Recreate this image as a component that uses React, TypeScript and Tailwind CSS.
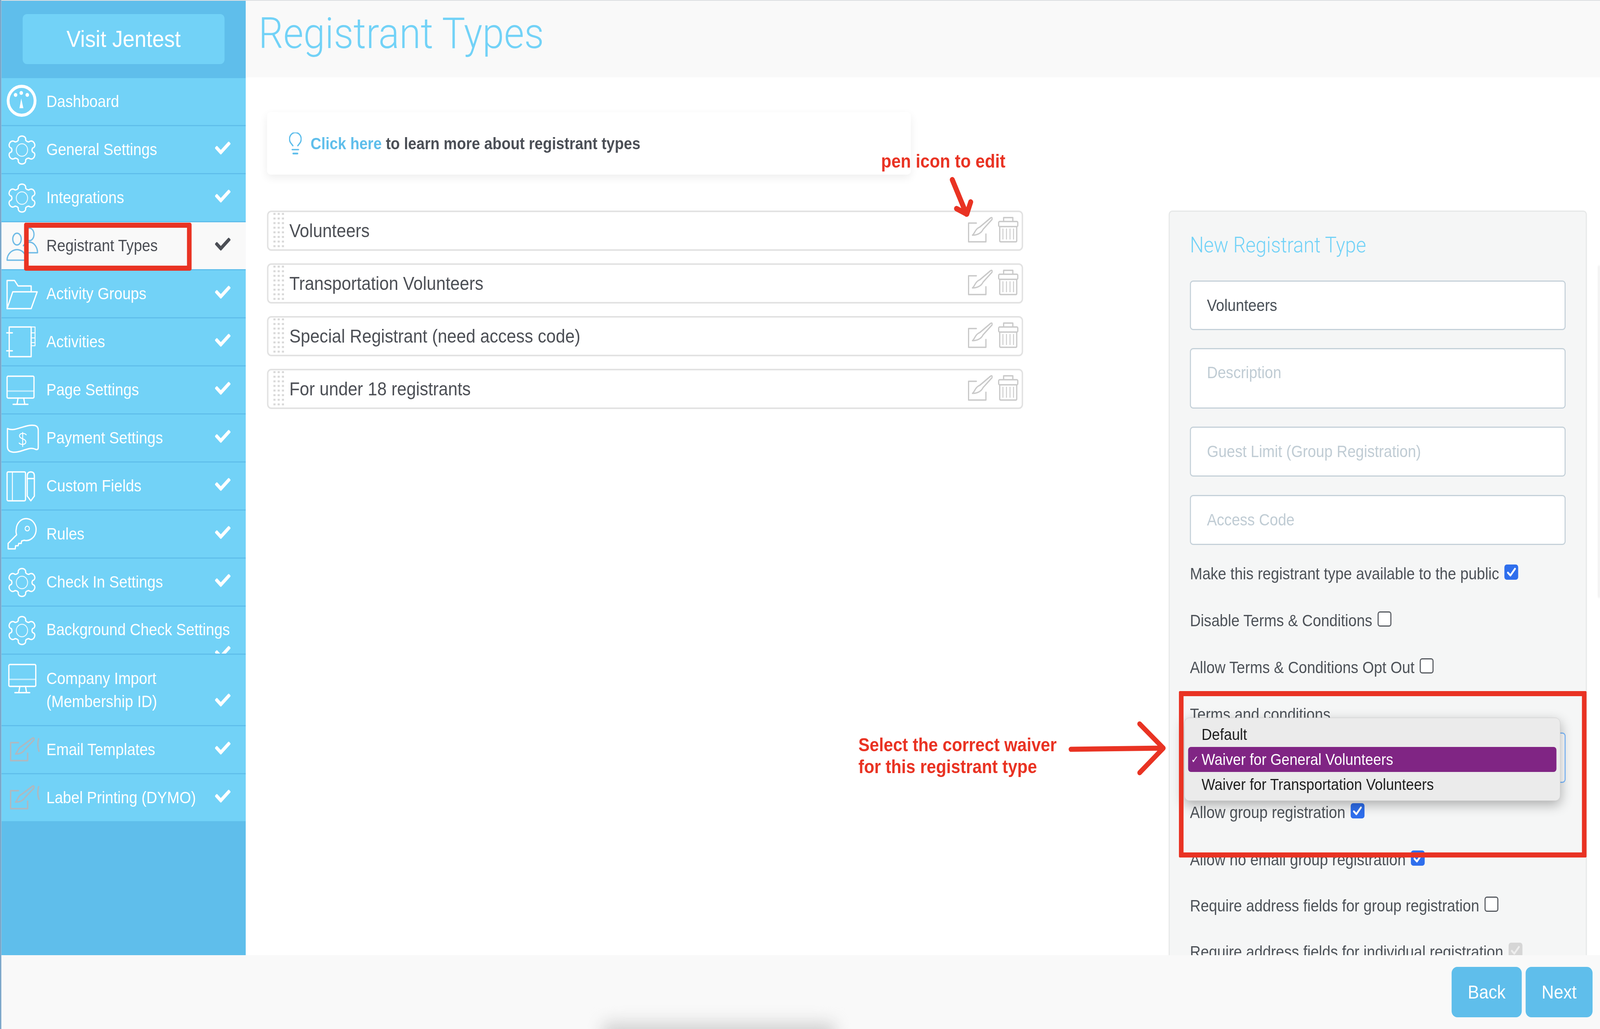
import React from "react";
import { FaCheck } from "react-icons/fa";

const gearPath = (() => {
  const cx = 62, cy = 61, sx = 1.12;
  const pt = (r: number, deg: number) => {
    const a = (deg * Math.PI) / 180;
    return `${(cx + r * Math.cos(a) * sx).toFixed(1)} ${(cy + r * Math.sin(a)).toFixed(1)}`;
  };
  let d = "";
  for (let i = 0; i < 6; i++) {
    const a = -90 + i * 60;
    d += (i === 0 ? `M${pt(27, a - 20)}` : `L${pt(27, a - 20)}`);
    d += `C${pt(41, a - 17)} ${pt(41, a + 17)} ${pt(27, a + 20)}`;
    d += `Q${pt(24, a + 30)} ${pt(27, a + 40)}`;
  }
  return d + "Z";
})();

const IconBox = ({ children, stroke = "white", width = 3.5 }: { children: React.ReactNode; stroke?: string; width?: number | string }) => (
  <svg width="127" height="120" viewBox="4 0 127 120" fill="none" stroke={stroke} strokeWidth={width} strokeLinejoin="round" strokeLinecap="round" className="shrink-0">
    {children}
  </svg>
);

const Dashboard = () => (
  <IconBox>
    <ellipse cx="61" cy="58" rx="38" ry="37" strokeWidth="8" />
    <circle cx="44" cy="43" r="5" fill="white" stroke="none" />
    <circle cx="60" cy="38" r="5" fill="white" stroke="none" />
    <circle cx="77" cy="43" r="5" fill="white" stroke="none" />
    <path d="M60 52 L55 77 H66 Z" fill="white" stroke="none" />
  </IconBox>
);
const Gear = () => (
  <IconBox>
    <path d={gearPath} />
    <circle cx="62" cy="61" r="16" strokeWidth="2.5" opacity="0.85" />
  </IconBox>
);
const People = () => (
  <IconBox stroke="#6fbbe6">
    <ellipse cx="48" cy="43" rx="12" ry="15" />
    <path d="M20 97 C20 80 35 70 48 70 C62 70 74 80 74 97 Z" />
    <ellipse cx="83" cy="31" rx="13" ry="16" />
    <path d="M66 60 C72 53 78 51 84 51 C96 51 106 64 106 78 H72" />
  </IconBox>
);
const Folder = () => (
  <IconBox>
    <path d="M20 98 V26 H41 L51 40 H88 V55" />
    <path d="M20 98 L36 55 H105 L88 98 Z" />
  </IconBox>
);
const Notebook = () => (
  <IconBox>
    <path d="M26 22 H88 V98 H26 Z" />
    <path d="M88 22 H99 V70 H88 M88 37 H99 M88 50 H99 M88 62 H99" strokeWidth="2.5" />
    <path d="M19 37 H35 M19 83 H35" />
  </IconBox>
);
const Monitor = ({ dx = 0 }: { dx?: number }) => (
  <IconBox>
    <g transform={`translate(${dx} 0)`}>
      <rect x="20" y="25" width="76" height="56" rx="3" />
      <path d="M21 63 H95" opacity="0.6" />
      <path d="M51 81 L48 97 M67 81 L70 97 M37 97 H79" />
    </g>
  </IconBox>
);
const Money = () => (
  <IconBox>
    <path d="M21 36 C42 46 70 24 98 28 Q108 30 108 40 V84 Q108 92 100 89 C82 80 58 100 34 96 Q21 94 21 82 Z" />
    <path d="M74 52 C70 47 56 47 55 54 C54 63 74 61 73 71 C72 78 58 78 54 73 M64 46 V82" strokeWidth="2.5" />
  </IconBox>
);
const BookPencil = () => (
  <IconBox>
    <rect x="20" y="24" width="52" height="74" rx="3" />
    <path d="M35 24 V98" strokeWidth="2.5" />
    <path d="M77 34 Q77 24 87 24 Q97 24 97 34 V86 L87 98 L77 86 Z M77 41 H97" />
  </IconBox>
);
const Key = () => (
  <IconBox>
    <path d="M46 47 A28 28 0 1 1 68 76 L61 78 L60 84 L53 84 L51 90 L44 90 L43 98 L23 98 L23 84 L47 62 Q44 54 46 47 Z" />
    <circle cx="77" cy="46" r="6" strokeWidth="2.5" />
  </IconBox>
);
const BrushRow = () => (
  <IconBox stroke="#aeb9c1" width="4">
    <path d="M52 42 H30 V88 H78 V69" />
    <path d="M91 31 C95 28 98 32 95 36 L70 60 C64 69 55 71 44 71 C50 66 50 58 58 53 L63 50 Z" />
    <path d="M109 32 C106 42 106 54 110 64" />
  </IconBox>
);

const PenIcon = () => (
  <svg width="70" height="66" viewBox="0 0 70 66" fill="none" stroke="#c9c9c9" strokeWidth="3.5" strokeLinejoin="round" strokeLinecap="round" className="shrink-0">
    <path d="M24 16 H2 V64 H51 V44" />
    <path d="M64 3 C67 0 71 4 68 7 L43 32 C38 42 26 47 13 47 C20 42 20 33 30 28 L34 26 Z" />
  </svg>
);
const TrashIcon = () => (
  <svg width="58" height="66" viewBox="0 0 58 66" fill="none" stroke="#c9c9c9" strokeWidth="3.5" strokeLinejoin="round" className="shrink-0">
    <path d="M16 12 V2 H42 V12" />
    <rect x="2" y="12" width="54" height="13" rx="3" />
    <path d="M5 25 V61 Q5 64 8 64 H50 Q53 64 53 61 V25" />
    <path d="M14 30 V58 M24 30 V58 M34 30 V58 M44 30 V58" strokeWidth="2.5" />
  </svg>
);
const Bulb = () => (
  <svg width="36" height="57" viewBox="0 0 36 57" fill="none" stroke="#5fbeeb" strokeWidth="3.5" strokeLinecap="round" className="shrink-0">
    <path d="M11 34 L5 27 A16.5 16.5 0 1 1 31 27 L25 34" />
    <path d="M9 44 H27" />
    <path d="M12 54 H24" strokeWidth="4.5" />
  </svg>
);
const Grip = () => (
  <svg width="32" height="96" viewBox="0 0 32 96" className="shrink-0" fill="#d9d9d9">
    {[0, 1, 2, 3, 4, 5, 6, 7, 8].map((r) =>
      [0, 12, 24].map((c) => <rect key={`${r}-${c}`} x={c + 2} y={r * 11.8 + 2} width="6" height="5" />)
    )}
  </svg>
);

type Item = { label: string; icon: React.ReactNode; check?: boolean; active?: boolean };
const items: Item[] = [
  { label: "Dashboard", icon: <Dashboard /> },
  { label: "General Settings", icon: <Gear />, check: true },
  { label: "Integrations", icon: <Gear />, check: true },
  { label: "Registrant Types", icon: <People />, check: true, active: true },
  { label: "Activity Groups", icon: <Folder />, check: true },
  { label: "Activities", icon: <Notebook />, check: true },
  { label: "Page Settings", icon: <Monitor />, check: true },
  { label: "Payment Settings", icon: <Money />, check: true },
  { label: "Custom Fields", icon: <BookPencil />, check: true },
  { label: "Rules", icon: <Key />, check: true },
  { label: "Check In Settings", icon: <Gear />, check: true },
];

const Check = ({ dark }: { dark?: boolean }) => (
  <FaCheck className={`w-[44px] h-[44px] shrink-0 ${dark ? "text-[#4b4e55]" : "text-white"}`} />
);

const Row = ({ label, icon, check, active }: Item) => (
  <div className={`flex items-center h-[123px] border-b-[3px] border-[#5fbeeb] pr-[43px] ${active ? "bg-[#f9f9f9] text-[#4b4e55]" : "bg-[#72d2f7] text-white"}`}>
    {icon}
    <span className="flex-1 text-[42px] leading-[60px]">{label}</span>
    {check && <div className="-mt-[8px]"><Check dark={active} /></div>}
  </div>
);

const listRows = ["Volunteers", "Transportation Volunteers", "Special Registrant (need access code)", "For under 18 registrants"];

const Box = ({ kind }: { kind: "on" | "off" | "disabled" }) => {
  if (kind === "off") return <div className="w-[39px] h-[39px] mt-[6px] shrink-0 rounded-[7px] border-[3px] border-[#55595f] bg-white" />;
  return (
    <div className={`w-[39px] h-[39px] mt-[6px] shrink-0 rounded-[7px] flex items-center justify-center ${kind === "on" ? "bg-[#2f6fed]" : "bg-[#d6d6d6]"}`}>
      <svg width="28" height="26" viewBox="0 0 28 26" fill="none" stroke={kind === "on" ? "white" : "#eeeeee"} strokeWidth="5" strokeLinecap="round" strokeLinejoin="round">
        <path d="M4 14 L11 21 L24 4" />
      </svg>
    </div>
  );
};

const CheckLine = ({ label, kind, className }: { label: string; kind: "on" | "off" | "disabled"; className: string }) => (
  <div className={`flex items-start gap-[15px] h-[60px] ${className}`}>
    <span className="leading-[60px] whitespace-nowrap">{label}</span>
    <Box kind={kind} />
  </div>
);

const fieldClass =
  "block w-[1061px] border-[3px] border-[#c5d1d9] rounded-[9px] bg-white pl-[45px] text-[42px] text-[#495057] placeholder:text-[#c0ccd4] outline-none";

export default function App() {
  // The browser caps the window's width (4096px was measured against the 4518px asked for),
  // so the 4518px design is narrowed horizontally to the real window width; at 4518px this is 1.
  const fit = Math.min(1, window.innerWidth / 4518);
  return (
    <div className="w-screen h-[2634px] overflow-hidden">
      <div
        className="relative flex w-[4518px] h-[2634px] overflow-hidden bg-white origin-top-left font-['Liberation_Sans','DejaVu_Sans',sans-serif]"
        style={{ transform: `scaleX(${fit})` }}
      >
        <div className="w-[4px] shrink-0 bg-[#7ba6c9]" />
        <div className="flex-1 flex flex-col min-w-0">
          <div className="h-[2px] shrink-0 bg-[#dcdfe2]" />
          <div className="flex h-[2443px] shrink-0 overflow-hidden">
            {/* Sidebar */}
            <aside className="w-[690px] shrink-0 bg-[#5fbeeb]">
              <div className="h-[198px] pt-[34px] pl-[60px]">
                <div className="w-[570px] h-[128px] rounded-[12px] bg-[#72d2f7] flex items-center justify-center text-[60px] text-white">
                  Visit Jentest
                </div>
              </div>
              {items.map((it) => (
                <Row key={it.label} {...it} />
              ))}
              <div className="flex items-start h-[123px] overflow-hidden border-b-[3px] border-[#5fbeeb] bg-[#72d2f7] text-white pr-[43px]">
                <Gear />
                <div className="flex-1 flex flex-col">
                  <span className="mt-[29px] text-[42px] leading-[60px] whitespace-nowrap">Background Check Settings</span>
                  <div className="self-end mt-[6px]"><Check /></div>
                </div>
              </div>
              <div className="flex h-[183px] border-b-[3px] border-[#5fbeeb] bg-[#72d2f7] text-white pr-[43px]">
                <Monitor dx={5} />
                <span className="flex-1 self-center text-[42px] leading-[59px]">Company Import<br />(Membership ID)</span>
                <div className="self-end mb-[42px]"><Check /></div>
              </div>
              <div className="flex items-center h-[123px] border-b-[3px] border-[#5fbeeb] bg-[#72d2f7] text-white pr-[43px]">
                <BrushRow />
                <span className="flex-1 text-[42px] leading-[60px]">Email Templates</span>
                <div className="-mt-[8px]"><Check /></div>
              </div>
              <div className="flex items-center h-[120px] bg-[#72d2f7] text-white pr-[43px]">
                <BrushRow />
                <span className="flex-1 text-[42px] leading-[60px]">Label Printing (DYMO)</span>
                <div className="-mt-[8px]"><Check /></div>
              </div>
            </aside>

            {/* Main */}
            <main className="flex-1 flex flex-col min-w-0">
              <header className="h-[196px] shrink-0 bg-[#f9f9f9] pl-[36px] pt-[24px]">
                <h1 className="font-['Roboto',sans-serif] font-light text-[110px] leading-[120px] text-[#72d2f7] whitespace-nowrap">Registrant Types</h1>
              </header>
              <div className="flex-1 flex min-h-0 bg-white">
                <div className="w-[2135px] ml-[60px] shrink-0 pt-[89px]">
                  <div className="flex items-center gap-[25px] h-[160px] w-[1818px] pl-[62px] rounded-[10px] bg-white shadow-[0_8px_24px_rgba(0,0,0,0.07)] text-[42px] font-bold text-[#4b4f56]">
                    <Bulb />
                    <p className="whitespace-nowrap">
                      <span className="text-[#5fbeeb]">Click here</span> to learn more about registrant types
                    </p>
                  </div>
                  <div className="mt-[92px] flex flex-col gap-[32px]">
                    {listRows.map((r) => (
                      <div key={r} className="flex items-center h-[103px] border-[4px] border-[#e2e2e2] rounded-[12px] pl-[12px] pr-[9px] text-[48px] text-[#4d5056] bg-white">
                        <Grip />
                        <span className="flex-1 ml-[15px] whitespace-nowrap">{r}</span>
                        <div className="flex items-start gap-[15px] -mt-[6px]">
                          <PenIcon />
                          <TrashIcon />
                        </div>
                      </div>
                    ))}
                  </div>
                </div>

                <div className="ml-[411px] mt-[341px] w-[1181px] h-[2400px] shrink-0 relative bg-[#f5f6f6] border-[3px] border-[#e6e8e8] rounded-[10px] px-[57px] pt-[55px] text-[42px] text-[#4d5258]">
                  <h2 className="font-['Roboto',sans-serif] font-light text-[55px] leading-[60px] text-[#72d2f7] mb-[61px] whitespace-nowrap">New Registrant Type</h2>
                  <input readOnly value="Volunteers" className={`${fieldClass} h-[127px] mb-[46px]`} />
                  <textarea readOnly placeholder="Description" className={`${fieldClass} h-[155px] pt-[28px] leading-[63px] resize-none mb-[46px]`} />
                  <input readOnly placeholder="Guest Limit (Group Registration)" className={`${fieldClass} h-[128px] mb-[47px]`} />
                  <input readOnly placeholder="Access Code" className={`${fieldClass} h-[128px]`} />
                  <CheckLine label="Make this registrant type available to the public" kind="on" className="mt-[44px]" />
                  <CheckLine label="Disable Terms & Conditions" kind="off" className="mt-[60px]" />
                  <CheckLine label="Allow Terms & Conditions Opt Out" kind="off" className="mt-[60px]" />
                  <div className="mt-[60px] h-[60px] leading-[60px]">Terms and conditions</div>
                  <div className="mt-[16px] w-[1061px] h-[129px] rounded-[9px] border-[3px] border-[#80bdff] bg-white" />
                  <CheckLine label="Allow group registration" kind="on" className="mt-[46px]" />
                  <CheckLine label="Allow no email group registration" kind="on" className="mt-[61px]" />
                  <CheckLine label="Require address fields for group registration" kind="off" className="mt-[58px]" />
                  <CheckLine label="Require address fields for individual registration" kind="disabled" className="mt-[58px]" />

                  {/* open select menu */}
                  <div className="absolute left-[41px] top-[1295px] w-[1062px] h-[213px] rounded-[14px] border border-[#cfcfcf] bg-[#ebebeb] shadow-[0_10px_32px_rgba(0,0,0,0.3)] px-[10px] pt-[10px] text-[40.5px] text-[#1d1d1d]">
                    <div className="h-[64px] flex items-center pl-[38px]">Default</div>
                    <div className="h-[64px] flex items-center rounded-[8px] bg-[#802584] text-white">
                      <span className="w-[38px] text-center text-[26px]">✓</span>
                      Waiver for General Volunteers
                    </div>
                    <div className="h-[64px] flex items-center pl-[38px]">Waiver for Transportation Volunteers</div>
                  </div>
                </div>
              </div>
            </main>
          </div>

          {/* Footer */}
          <footer className="h-[189px] shrink-0 bg-[#f9f9f9] flex justify-end gap-[11px] pt-[30px] pr-[21px]">
            <button className="w-[198px] h-[129px] rounded-[16px] bg-[#5fbeeb] text-white text-[48px]">Back</button>
            <button className="w-[189px] h-[129px] rounded-[16px] bg-[#5fbeeb] text-white text-[48px]">Next</button>
          </footer>
        </div>

        {/* soft shadow rising from below the fold */}
        <div className="absolute left-[1700px] top-[2620px] w-[660px] h-[60px] rounded-[20px] bg-[#cfcfcf] blur-[22px]" />
        {/* faint shadow at the right edge */}
        <div className="absolute right-0 top-[680px] w-[6px] h-[850px] bg-[#f1f1f1] blur-[2px]" />

        {/* Annotations */}
        <div className="absolute left-[68px] top-[570px] w-[473px] h-[123px] border-[13px] border-[#e93323] rounded-[5px]" />
        <div className="absolute left-[3329px] top-[1769px] w-[1151px] h-[426px] border-[13px] border-[#e93323] rounded-[3px]" />
        <span className="absolute left-[2488px] top-[385px] text-[47.5px] leading-[56px] font-bold text-[#e93323] whitespace-nowrap">pen icon to edit</span>
        <p className="absolute left-[2424px] top-[1879px] text-[47.5px] leading-[56px] font-bold text-[#e93323] whitespace-nowrap">
          Select the correct waiver<br />for this registrant type
        </p>
        <svg className="absolute left-[2680px] top-[450px]" width="80" height="110" viewBox="2680 450 80 110" fill="none" stroke="#e93323" strokeWidth="14" strokeLinecap="round" strokeLinejoin="round">
          <path d="M2689 460 L2729 548 M2701 534 L2730 548 L2741 517" />
        </svg>
        <svg className="absolute left-[3010px] top-[1840px]" width="290" height="150" viewBox="3010 1840 290 150" fill="none" stroke="#e93323" strokeWidth="13" strokeLinecap="round" strokeLinejoin="round">
          <path d="M3024 1918 L3280 1915 M3218 1853 L3285 1915 L3218 1978" />
        </svg>
      </div>
    </div>
  );
}
